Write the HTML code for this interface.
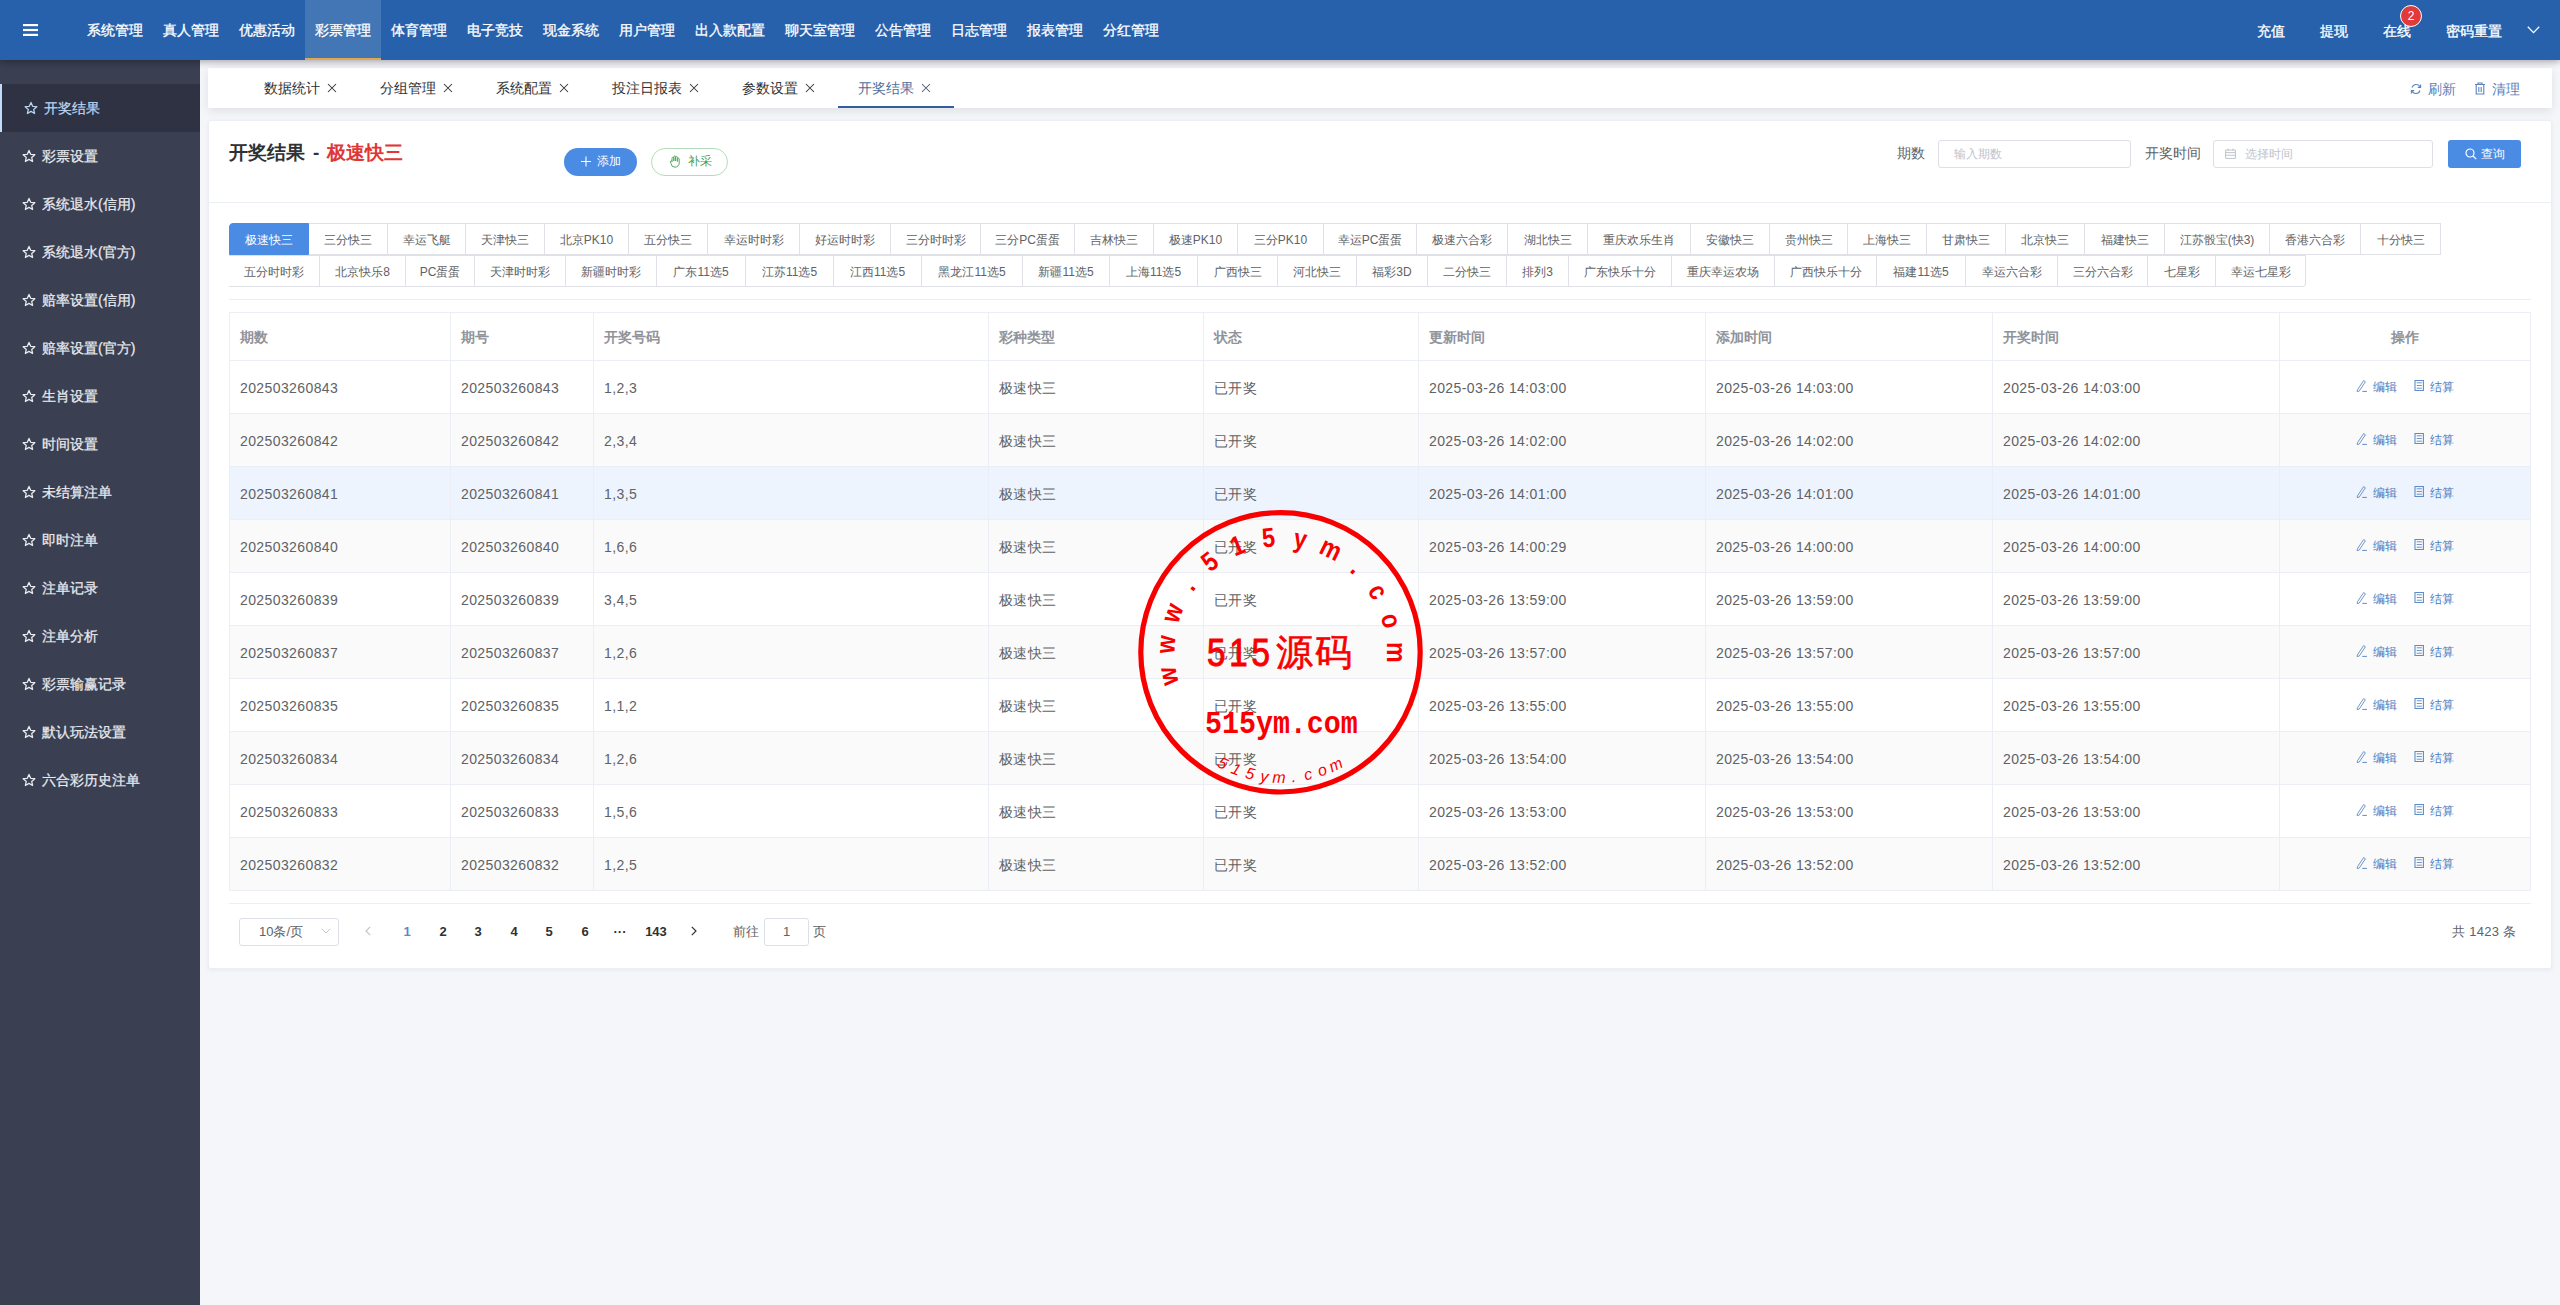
<!DOCTYPE html><html><head><meta charset="utf-8"><style>
*{box-sizing:border-box;margin:0;padding:0}
html,body{width:2560px;height:1305px;overflow:hidden}
body{position:relative;background:#f4f6fa;font-family:"Liberation Sans",sans-serif;font-size:14px;color:#606266}
.abs{position:absolute}
.t{position:absolute;white-space:nowrap}
#top{left:0;top:0;width:2560px;height:60px;background:#2761ac;box-shadow:0 2px 7px rgba(0,0,0,.32);z-index:5}
.nav{position:absolute;top:0;height:60px;line-height:60px;color:#fff;font-size:14px;padding:0 10px;white-space:nowrap;-webkit-text-stroke:0.3px #fff}
.nav.on{background:#4276b5}
.nav.on:after{content:"";position:absolute;left:0;right:0;bottom:0;height:2px;background:#e2a650}
#side{left:0;top:60px;width:200px;height:1245px;background:#3a3f51;z-index:3}
.si{position:absolute;left:0;width:200px;height:48px;line-height:48px;color:#e9ebf0;font-size:14px;padding-left:42px;white-space:nowrap;-webkit-text-stroke:0.25px currentColor}
.si svg{position:absolute;left:22px;top:17px}
.si.on{background:#2f3242;color:#b8d3f2;padding-left:44px}
.si.on svg{left:24px}
.si.on:before{content:"";position:absolute;left:0;top:0;width:2px;height:48px;background:#c3dbf8}
.card{position:absolute;background:#fff;border-radius:3px}
.tab{position:absolute;top:68px;height:40px;line-height:40px;font-size:14px;color:#303133;white-space:nowrap}
.tab .x{position:absolute;top:0}
.lt{position:absolute;height:32px;line-height:32px;font-size:12px;color:#606266;text-align:center;white-space:nowrap;border:1px solid #dfe1e6;border-left:none;background:#fff}
.lt.first{border-left:1px solid #dfe1e6}
.lt.on{background:#4a8be3;border-color:#4a8be3;color:#fff}
.th{position:absolute;font-size:14px;font-weight:bold;color:#909399;white-space:nowrap;padding-top:1px}
.td{position:absolute;font-size:14px;color:#606266;white-space:nowrap;letter-spacing:0.4px}
.op{position:absolute;font-size:12px;color:#4a7cbf;white-space:nowrap}
.pg{position:absolute;font-size:13px;font-weight:bold;color:#303133;text-align:center;width:30px}
</style></head><body>
<div id="top" class="abs">
<svg class="abs" style="left:23px;top:24px" width="15" height="12" viewBox="0 0 15 12"><rect x="0" y="0" width="15" height="2.2" fill="#fff"/><rect x="0" y="4.9" width="15" height="2.2" fill="#fff"/><rect x="0" y="9.8" width="15" height="2.2" fill="#fff"/></svg>
<div class="nav" style="left:77px;width:76px">系统管理</div>
<div class="nav" style="left:153px;width:76px">真人管理</div>
<div class="nav" style="left:229px;width:76px">优惠活动</div>
<div class="nav on" style="left:305px;width:76px">彩票管理</div>
<div class="nav" style="left:381px;width:76px">体育管理</div>
<div class="nav" style="left:457px;width:76px">电子竞技</div>
<div class="nav" style="left:533px;width:76px">现金系统</div>
<div class="nav" style="left:609px;width:76px">用户管理</div>
<div class="nav" style="left:685px;width:90px">出入款配置</div>
<div class="nav" style="left:775px;width:90px">聊天室管理</div>
<div class="nav" style="left:865px;width:76px">公告管理</div>
<div class="nav" style="left:941px;width:76px">日志管理</div>
<div class="nav" style="left:1017px;width:76px">报表管理</div>
<div class="nav" style="left:1093px;width:76px">分红管理</div>
<div class="t" style="left:2257px;top:0;line-height:62px;color:#fff;font-size:14px;-webkit-text-stroke:0.3px #fff">充值</div>
<div class="t" style="left:2320px;top:0;line-height:62px;color:#fff;font-size:14px;-webkit-text-stroke:0.3px #fff">提现</div>
<div class="t" style="left:2383px;top:0;line-height:62px;color:#fff;font-size:14px;-webkit-text-stroke:0.3px #fff">在线</div>
<div class="t" style="left:2446px;top:0;line-height:62px;color:#fff;font-size:14px;-webkit-text-stroke:0.3px #fff">密码重置</div>
<svg class="abs" style="left:2527px;top:26px" width="13" height="8" viewBox="0 0 13 8"><path d="M0.8 0.8 L6.5 6.6 L12.2 0.8" fill="none" stroke="#fff" stroke-width="1.3"/></svg>
<div class="abs" style="left:2400px;top:5px;width:22px;height:22px;border-radius:50%;background:#e03a3a;border:1px solid #fff;color:#fff;font-size:12px;line-height:20px;text-align:center">2</div>
</div>
<div id="side" class="abs">
<div class="si on" style="top:24px"><svg width="14" height="14" viewBox="0 0 24 24"><path d="M12 2.5l2.9 6.6 7.1.6-5.4 4.7 1.6 7-6.2-3.7-6.2 3.7 1.6-7L2 9.7l7.1-.6z" fill="none" stroke="#b8d3f2" stroke-width="2.2" stroke-linejoin="round"/></svg>开奖结果</div>
<div class="si" style="top:72px"><svg width="14" height="14" viewBox="0 0 24 24"><path d="M12 2.5l2.9 6.6 7.1.6-5.4 4.7 1.6 7-6.2-3.7-6.2 3.7 1.6-7L2 9.7l7.1-.6z" fill="none" stroke="#e9ebf0" stroke-width="2.2" stroke-linejoin="round"/></svg>彩票设置</div>
<div class="si" style="top:120px"><svg width="14" height="14" viewBox="0 0 24 24"><path d="M12 2.5l2.9 6.6 7.1.6-5.4 4.7 1.6 7-6.2-3.7-6.2 3.7 1.6-7L2 9.7l7.1-.6z" fill="none" stroke="#e9ebf0" stroke-width="2.2" stroke-linejoin="round"/></svg>系统退水(信用)</div>
<div class="si" style="top:168px"><svg width="14" height="14" viewBox="0 0 24 24"><path d="M12 2.5l2.9 6.6 7.1.6-5.4 4.7 1.6 7-6.2-3.7-6.2 3.7 1.6-7L2 9.7l7.1-.6z" fill="none" stroke="#e9ebf0" stroke-width="2.2" stroke-linejoin="round"/></svg>系统退水(官方)</div>
<div class="si" style="top:216px"><svg width="14" height="14" viewBox="0 0 24 24"><path d="M12 2.5l2.9 6.6 7.1.6-5.4 4.7 1.6 7-6.2-3.7-6.2 3.7 1.6-7L2 9.7l7.1-.6z" fill="none" stroke="#e9ebf0" stroke-width="2.2" stroke-linejoin="round"/></svg>赔率设置(信用)</div>
<div class="si" style="top:264px"><svg width="14" height="14" viewBox="0 0 24 24"><path d="M12 2.5l2.9 6.6 7.1.6-5.4 4.7 1.6 7-6.2-3.7-6.2 3.7 1.6-7L2 9.7l7.1-.6z" fill="none" stroke="#e9ebf0" stroke-width="2.2" stroke-linejoin="round"/></svg>赔率设置(官方)</div>
<div class="si" style="top:312px"><svg width="14" height="14" viewBox="0 0 24 24"><path d="M12 2.5l2.9 6.6 7.1.6-5.4 4.7 1.6 7-6.2-3.7-6.2 3.7 1.6-7L2 9.7l7.1-.6z" fill="none" stroke="#e9ebf0" stroke-width="2.2" stroke-linejoin="round"/></svg>生肖设置</div>
<div class="si" style="top:360px"><svg width="14" height="14" viewBox="0 0 24 24"><path d="M12 2.5l2.9 6.6 7.1.6-5.4 4.7 1.6 7-6.2-3.7-6.2 3.7 1.6-7L2 9.7l7.1-.6z" fill="none" stroke="#e9ebf0" stroke-width="2.2" stroke-linejoin="round"/></svg>时间设置</div>
<div class="si" style="top:408px"><svg width="14" height="14" viewBox="0 0 24 24"><path d="M12 2.5l2.9 6.6 7.1.6-5.4 4.7 1.6 7-6.2-3.7-6.2 3.7 1.6-7L2 9.7l7.1-.6z" fill="none" stroke="#e9ebf0" stroke-width="2.2" stroke-linejoin="round"/></svg>未结算注单</div>
<div class="si" style="top:456px"><svg width="14" height="14" viewBox="0 0 24 24"><path d="M12 2.5l2.9 6.6 7.1.6-5.4 4.7 1.6 7-6.2-3.7-6.2 3.7 1.6-7L2 9.7l7.1-.6z" fill="none" stroke="#e9ebf0" stroke-width="2.2" stroke-linejoin="round"/></svg>即时注单</div>
<div class="si" style="top:504px"><svg width="14" height="14" viewBox="0 0 24 24"><path d="M12 2.5l2.9 6.6 7.1.6-5.4 4.7 1.6 7-6.2-3.7-6.2 3.7 1.6-7L2 9.7l7.1-.6z" fill="none" stroke="#e9ebf0" stroke-width="2.2" stroke-linejoin="round"/></svg>注单记录</div>
<div class="si" style="top:552px"><svg width="14" height="14" viewBox="0 0 24 24"><path d="M12 2.5l2.9 6.6 7.1.6-5.4 4.7 1.6 7-6.2-3.7-6.2 3.7 1.6-7L2 9.7l7.1-.6z" fill="none" stroke="#e9ebf0" stroke-width="2.2" stroke-linejoin="round"/></svg>注单分析</div>
<div class="si" style="top:600px"><svg width="14" height="14" viewBox="0 0 24 24"><path d="M12 2.5l2.9 6.6 7.1.6-5.4 4.7 1.6 7-6.2-3.7-6.2 3.7 1.6-7L2 9.7l7.1-.6z" fill="none" stroke="#e9ebf0" stroke-width="2.2" stroke-linejoin="round"/></svg>彩票输赢记录</div>
<div class="si" style="top:648px"><svg width="14" height="14" viewBox="0 0 24 24"><path d="M12 2.5l2.9 6.6 7.1.6-5.4 4.7 1.6 7-6.2-3.7-6.2 3.7 1.6-7L2 9.7l7.1-.6z" fill="none" stroke="#e9ebf0" stroke-width="2.2" stroke-linejoin="round"/></svg>默认玩法设置</div>
<div class="si" style="top:696px"><svg width="14" height="14" viewBox="0 0 24 24"><path d="M12 2.5l2.9 6.6 7.1.6-5.4 4.7 1.6 7-6.2-3.7-6.2 3.7 1.6-7L2 9.7l7.1-.6z" fill="none" stroke="#e9ebf0" stroke-width="2.2" stroke-linejoin="round"/></svg>六合彩历史注单</div>
</div>
<div class="abs" style="left:208px;top:68px;width:2344px;height:40px;background:#fff;box-shadow:0 3px 10px rgba(0,0,0,.09)"></div>
<div class="t" style="left:264px;top:68px;line-height:40px;font-size:14px;color:#303133">数据统计</div>
<div class="abs" style="left:327px;top:83px;line-height:0"><svg width="10" height="10" viewBox="0 0 10 10"><path d="M1 1L9 9M9 1L1 9" stroke="#303133" stroke-width="1.05"/></svg></div>
<div class="t" style="left:380px;top:68px;line-height:40px;font-size:14px;color:#303133">分组管理</div>
<div class="abs" style="left:443px;top:83px;line-height:0"><svg width="10" height="10" viewBox="0 0 10 10"><path d="M1 1L9 9M9 1L1 9" stroke="#303133" stroke-width="1.05"/></svg></div>
<div class="t" style="left:496px;top:68px;line-height:40px;font-size:14px;color:#303133">系统配置</div>
<div class="abs" style="left:559px;top:83px;line-height:0"><svg width="10" height="10" viewBox="0 0 10 10"><path d="M1 1L9 9M9 1L1 9" stroke="#303133" stroke-width="1.05"/></svg></div>
<div class="t" style="left:612px;top:68px;line-height:40px;font-size:14px;color:#303133">投注日报表</div>
<div class="abs" style="left:689px;top:83px;line-height:0"><svg width="10" height="10" viewBox="0 0 10 10"><path d="M1 1L9 9M9 1L1 9" stroke="#303133" stroke-width="1.05"/></svg></div>
<div class="t" style="left:742px;top:68px;line-height:40px;font-size:14px;color:#303133">参数设置</div>
<div class="abs" style="left:805px;top:83px;line-height:0"><svg width="10" height="10" viewBox="0 0 10 10"><path d="M1 1L9 9M9 1L1 9" stroke="#303133" stroke-width="1.05"/></svg></div>
<div class="t" style="left:858px;top:68px;line-height:40px;font-size:14px;color:#4f6f9f">开奖结果</div>
<div class="abs" style="left:921px;top:83px;line-height:0"><svg width="10" height="10" viewBox="0 0 10 10"><path d="M1 1L9 9M9 1L1 9" stroke="#505a6a" stroke-width="1.05"/></svg></div>
<div class="abs" style="left:838px;top:106px;width:116px;height:2px;background:#335e9a"></div>
<svg class="abs" style="left:2410px;top:83px" width="12" height="12" viewBox="0 0 12 12"><path d="M10.2 4.2A4.4 4.4 0 0 0 2 4.5M1.8 7.8A4.4 4.4 0 0 0 10 7.5" fill="none" stroke="#5b84c0" stroke-width="1.1"/><path d="M10.6 1.6v2.8H7.8M1.4 10.4V7.6h2.8" fill="none" stroke="#5b84c0" stroke-width="1.1"/></svg>
<div class="t" style="left:2428px;top:68px;line-height:43px;font-size:14px;color:#5b80b8">刷新</div>
<svg class="abs" style="left:2474px;top:82px" width="12" height="13" viewBox="0 0 12 13"><path d="M1 2.5h10M4 2.5V1h4v1.5M2.2 2.5v9.5h7.6V2.5M4.8 5v5M7.2 5v5" fill="none" stroke="#5b84c0" stroke-width="1.1"/></svg>
<div class="t" style="left:2492px;top:68px;line-height:43px;font-size:14px;color:#5b80b8">清理</div>
<div class="card" style="left:208px;top:120px;width:2344px;height:849px;box-shadow:0 1px 4px rgba(0,0,0,.06);border:1px solid #ebeef5"></div>
<div class="abs" style="left:209px;top:202px;width:2342px;height:1px;background:#ebeef5"></div>
<div class="t" style="left:229px;top:140px;line-height:26px;font-size:19px;font-weight:bold;color:#303133">开奖结果</div>
<div class="t" style="left:313px;top:140px;line-height:26px;font-size:19px;font-weight:bold;color:#303133">-</div>
<div class="t" style="left:327px;top:140px;line-height:26px;font-size:19px;font-weight:bold;color:#e03636">极速快三</div>
<div class="abs" style="left:564px;top:148px;width:73px;height:28px;border-radius:14px;background:#4a8be3;color:#fff;font-size:12px;line-height:26px;padding-left:33px;white-space:nowrap">添加</div>
<svg class="abs" style="left:581px;top:156px" width="10" height="11" viewBox="0 0 10 11"><path d="M5 0.5v10M0 5.5h10" stroke="#fff" stroke-width="1.1"/></svg>
<div class="abs" style="left:651px;top:148px;width:77px;height:28px;border-radius:14px;background:#fff;border:1px solid #b5dcb9;color:#3f9e4c;font-size:12px;line-height:25px;padding-left:36px;white-space:nowrap">补采</div>
<svg class="abs" style="left:669px;top:155px" width="12" height="13" viewBox="0 0 12 13"><path d="M3 7V3.2a.9.9 0 0 1 1.8 0V6M4.8 6V1.8a.9.9 0 0 1 1.8 0V6M6.6 6V2.5a.9.9 0 0 1 1.8 0V6.5M8.4 6.5V4a.9.9 0 0 1 1.8 0v4a4.2 4.2 0 0 1-4.2 4.2A4 4 0 0 1 2 8.5L1.3 6.8a.9.9 0 0 1 1.6-.6L3 7" fill="none" stroke="#4fae5d" stroke-width="1"/></svg>
<div class="t" style="left:1897px;top:139px;line-height:28px;font-size:14px;color:#606266">期数</div>
<div class="abs" style="left:1938px;top:140px;width:193px;height:28px;border:1px solid #dcdfe6;border-radius:3px;font-size:12px;color:#c0c4cc;line-height:26px;padding-left:15px">输入期数</div>
<div class="t" style="left:2145px;top:139px;line-height:28px;font-size:14px;color:#606266">开奖时间</div>
<div class="abs" style="left:2213px;top:140px;width:220px;height:28px;border:1px solid #dcdfe6;border-radius:3px;font-size:12px;color:#c0c4cc;line-height:26px;padding-left:31px">选择时间</div>
<svg class="abs" style="left:2225px;top:148px" width="11" height="11" viewBox="0 0 11 11"><path d="M.6 2h9.8v8.4H.6zM.6 4.6h9.8M.6 7.2h9.8M3 .5v2.5M8 .5v2.5" fill="none" stroke="#c0c4cc" stroke-width="1"/></svg>
<div class="abs" style="left:2448px;top:140px;width:73px;height:28px;border-radius:3px;background:#4a8be3;color:#fff;font-size:12px;line-height:28px;padding-left:33px">查询</div>
<svg class="abs" style="left:2465px;top:148px" width="12" height="12" viewBox="0 0 12 12"><circle cx="5" cy="5" r="4" fill="none" stroke="#fff" stroke-width="1.2"/><path d="M8 8l3.2 3.2" stroke="#fff" stroke-width="1.2"/></svg>
<div class="lt first on" style="left:229.0px;top:223px;width:80.0px;border-top-left-radius:4px;">极速快三</div>
<div class="lt" style="left:309.0px;top:223px;width:79.0px;">三分快三</div>
<div class="lt" style="left:388.0px;top:223px;width:78.0px;">幸运飞艇</div>
<div class="lt" style="left:466.0px;top:223px;width:79.0px;">天津快三</div>
<div class="lt" style="left:545.0px;top:223px;width:84.0px;">北京PK10</div>
<div class="lt" style="left:629.0px;top:223px;width:79.0px;">五分快三</div>
<div class="lt" style="left:708.0px;top:223px;width:92.0px;">幸运时时彩</div>
<div class="lt" style="left:800.0px;top:223px;width:91.0px;">好运时时彩</div>
<div class="lt" style="left:891.0px;top:223px;width:90.0px;">三分时时彩</div>
<div class="lt" style="left:981.0px;top:223px;width:94.0px;">三分PC蛋蛋</div>
<div class="lt" style="left:1075.0px;top:223px;width:79.0px;">吉林快三</div>
<div class="lt" style="left:1154.0px;top:223px;width:84.0px;">极速PK10</div>
<div class="lt" style="left:1238.0px;top:223px;width:86.0px;">三分PK10</div>
<div class="lt" style="left:1324.0px;top:223px;width:93.0px;">幸运PC蛋蛋</div>
<div class="lt" style="left:1417.0px;top:223px;width:91.0px;">极速六合彩</div>
<div class="lt" style="left:1508.0px;top:223px;width:80.0px;">湖北快三</div>
<div class="lt" style="left:1588.0px;top:223px;width:103.0px;">重庆欢乐生肖</div>
<div class="lt" style="left:1691.0px;top:223px;width:79.0px;">安徽快三</div>
<div class="lt" style="left:1770.0px;top:223px;width:78.0px;">贵州快三</div>
<div class="lt" style="left:1848.0px;top:223px;width:79.0px;">上海快三</div>
<div class="lt" style="left:1927.0px;top:223px;width:79.0px;">甘肃快三</div>
<div class="lt" style="left:2006.0px;top:223px;width:79.0px;">北京快三</div>
<div class="lt" style="left:2085.0px;top:223px;width:80.0px;">福建快三</div>
<div class="lt" style="left:2165.0px;top:223px;width:105.0px;">江苏骰宝(快3)</div>
<div class="lt" style="left:2270.0px;top:223px;width:91.0px;">香港六合彩</div>
<div class="lt" style="left:2361.0px;top:223px;width:80.0px;">十分快三</div>
<div class="lt" style="left:229.0px;top:255px;width:91.0px;">五分时时彩</div>
<div class="lt" style="left:320.0px;top:255px;width:86.0px;">北京快乐8</div>
<div class="lt" style="left:406.0px;top:255px;width:69.0px;">PC蛋蛋</div>
<div class="lt" style="left:475.0px;top:255px;width:91.0px;">天津时时彩</div>
<div class="lt" style="left:566.0px;top:255px;width:91.0px;">新疆时时彩</div>
<div class="lt" style="left:657.0px;top:255px;width:89.0px;">广东11选5</div>
<div class="lt" style="left:746.0px;top:255px;width:88.0px;">江苏11选5</div>
<div class="lt" style="left:834.0px;top:255px;width:88.0px;">江西11选5</div>
<div class="lt" style="left:922.0px;top:255px;width:101.0px;">黑龙江11选5</div>
<div class="lt" style="left:1023.0px;top:255px;width:87.0px;">新疆11选5</div>
<div class="lt" style="left:1110.0px;top:255px;width:88.0px;">上海11选5</div>
<div class="lt" style="left:1198.0px;top:255px;width:80.0px;">广西快三</div>
<div class="lt" style="left:1278.0px;top:255px;width:79.0px;">河北快三</div>
<div class="lt" style="left:1357.0px;top:255px;width:71.0px;">福彩3D</div>
<div class="lt" style="left:1428.0px;top:255px;width:79.0px;">二分快三</div>
<div class="lt" style="left:1507.0px;top:255px;width:62.0px;">排列3</div>
<div class="lt" style="left:1569.0px;top:255px;width:103.0px;">广东快乐十分</div>
<div class="lt" style="left:1672.0px;top:255px;width:103.0px;">重庆幸运农场</div>
<div class="lt" style="left:1775.0px;top:255px;width:102.0px;">广西快乐十分</div>
<div class="lt" style="left:1877.0px;top:255px;width:89.0px;">福建11选5</div>
<div class="lt" style="left:1966.0px;top:255px;width:92.0px;">幸运六合彩</div>
<div class="lt" style="left:2058.0px;top:255px;width:90.0px;">三分六合彩</div>
<div class="lt" style="left:2148.0px;top:255px;width:68.0px;">七星彩</div>
<div class="lt" style="left:2216.0px;top:255px;width:90.0px;border-bottom-right-radius:4px;">幸运七星彩</div>
<div class="abs" style="left:229px;top:299px;width:2302px;height:1px;background:#ebeef5"></div>
<div class="abs" style="left:229px;top:312px;width:2302px;height:579px;border:1px solid #ebeef5;background:#fff"></div>
<div class="abs" style="left:230px;top:360px;width:2300px;height:53px;background:#fff;border-top:1px solid #ebeef5"></div>
<div class="abs" style="left:230px;top:413px;width:2300px;height:53px;background:#fafafa;border-top:1px solid #ebeef5"></div>
<div class="abs" style="left:230px;top:466px;width:2300px;height:53px;background:#eef4fd;border-top:1px solid #ebeef5"></div>
<div class="abs" style="left:230px;top:519px;width:2300px;height:53px;background:#fafafa;border-top:1px solid #ebeef5"></div>
<div class="abs" style="left:230px;top:572px;width:2300px;height:53px;background:#fff;border-top:1px solid #ebeef5"></div>
<div class="abs" style="left:230px;top:625px;width:2300px;height:53px;background:#fafafa;border-top:1px solid #ebeef5"></div>
<div class="abs" style="left:230px;top:678px;width:2300px;height:53px;background:#fff;border-top:1px solid #ebeef5"></div>
<div class="abs" style="left:230px;top:731px;width:2300px;height:53px;background:#fafafa;border-top:1px solid #ebeef5"></div>
<div class="abs" style="left:230px;top:784px;width:2300px;height:53px;background:#fff;border-top:1px solid #ebeef5"></div>
<div class="abs" style="left:230px;top:837px;width:2300px;height:53px;background:#fafafa;border-top:1px solid #ebeef5"></div>
<div class="abs" style="left:450px;top:312px;width:1px;height:578px;background:#ebeef5"></div>
<div class="abs" style="left:593px;top:312px;width:1px;height:578px;background:#ebeef5"></div>
<div class="abs" style="left:988px;top:312px;width:1px;height:578px;background:#ebeef5"></div>
<div class="abs" style="left:1203px;top:312px;width:1px;height:578px;background:#ebeef5"></div>
<div class="abs" style="left:1418px;top:312px;width:1px;height:578px;background:#ebeef5"></div>
<div class="abs" style="left:1705px;top:312px;width:1px;height:578px;background:#ebeef5"></div>
<div class="abs" style="left:1992px;top:312px;width:1px;height:578px;background:#ebeef5"></div>
<div class="abs" style="left:2279px;top:312px;width:1px;height:578px;background:#ebeef5"></div>
<div class="th" style="left:240px;top:312px;line-height:48px">期数</div>
<div class="th" style="left:461px;top:312px;line-height:48px">期号</div>
<div class="th" style="left:604px;top:312px;line-height:48px">开奖号码</div>
<div class="th" style="left:999px;top:312px;line-height:48px">彩种类型</div>
<div class="th" style="left:1214px;top:312px;line-height:48px">状态</div>
<div class="th" style="left:1429px;top:312px;line-height:48px">更新时间</div>
<div class="th" style="left:1716px;top:312px;line-height:48px">添加时间</div>
<div class="th" style="left:2003px;top:312px;line-height:48px">开奖时间</div>
<div class="th" style="left:2279px;width:252px;text-align:center;top:312px;line-height:48px">操作</div>
<div class="td" style="left:240px;top:360px;line-height:56px">202503260843</div>
<div class="td" style="left:461px;top:360px;line-height:56px">202503260843</div>
<div class="td" style="left:604px;top:360px;line-height:56px">1,2,3</div>
<div class="td" style="left:999px;top:360px;line-height:56px">极速快三</div>
<div class="td" style="left:1214px;top:360px;line-height:56px">已开奖</div>
<div class="td" style="left:1429px;top:360px;line-height:56px">2025-03-26 14:03:00</div>
<div class="td" style="left:1716px;top:360px;line-height:56px">2025-03-26 14:03:00</div>
<div class="td" style="left:2003px;top:360px;line-height:56px">2025-03-26 14:03:00</div>
<div class="abs" style="left:2355px;top:379px;line-height:0"><svg width="14" height="14" viewBox="0 0 14 14"><path d="M2.4 10.9L8.6 1.6L10.4 2.8L4.2 12.1L2.2 12.6Z" fill="none" stroke="#5f8bc6" stroke-width="0.9" stroke-linejoin="round"/><path d="M7.3 12.4h4.6" stroke="#5f8bc6" stroke-width="1"/></svg></div>
<div class="op" style="left:2373px;top:360px;line-height:55px">编辑</div>
<div class="abs" style="left:2414px;top:379px;line-height:0"><svg width="12" height="14" viewBox="0 0 12 14"><path d="M1 1.5H9.4V11.5H1Z" fill="none" stroke="#5f8bc6" stroke-width="1.1"/><path d="M2.7 3.8h5.2M2.7 6.5h5.2M2.7 9.2h5.2" stroke="#5f8bc6" stroke-width="0.9"/></svg></div>
<div class="op" style="left:2430px;top:360px;line-height:55px">结算</div>
<div class="td" style="left:240px;top:413px;line-height:56px">202503260842</div>
<div class="td" style="left:461px;top:413px;line-height:56px">202503260842</div>
<div class="td" style="left:604px;top:413px;line-height:56px">2,3,4</div>
<div class="td" style="left:999px;top:413px;line-height:56px">极速快三</div>
<div class="td" style="left:1214px;top:413px;line-height:56px">已开奖</div>
<div class="td" style="left:1429px;top:413px;line-height:56px">2025-03-26 14:02:00</div>
<div class="td" style="left:1716px;top:413px;line-height:56px">2025-03-26 14:02:00</div>
<div class="td" style="left:2003px;top:413px;line-height:56px">2025-03-26 14:02:00</div>
<div class="abs" style="left:2355px;top:432px;line-height:0"><svg width="14" height="14" viewBox="0 0 14 14"><path d="M2.4 10.9L8.6 1.6L10.4 2.8L4.2 12.1L2.2 12.6Z" fill="none" stroke="#5f8bc6" stroke-width="0.9" stroke-linejoin="round"/><path d="M7.3 12.4h4.6" stroke="#5f8bc6" stroke-width="1"/></svg></div>
<div class="op" style="left:2373px;top:413px;line-height:55px">编辑</div>
<div class="abs" style="left:2414px;top:432px;line-height:0"><svg width="12" height="14" viewBox="0 0 12 14"><path d="M1 1.5H9.4V11.5H1Z" fill="none" stroke="#5f8bc6" stroke-width="1.1"/><path d="M2.7 3.8h5.2M2.7 6.5h5.2M2.7 9.2h5.2" stroke="#5f8bc6" stroke-width="0.9"/></svg></div>
<div class="op" style="left:2430px;top:413px;line-height:55px">结算</div>
<div class="td" style="left:240px;top:466px;line-height:56px">202503260841</div>
<div class="td" style="left:461px;top:466px;line-height:56px">202503260841</div>
<div class="td" style="left:604px;top:466px;line-height:56px">1,3,5</div>
<div class="td" style="left:999px;top:466px;line-height:56px">极速快三</div>
<div class="td" style="left:1214px;top:466px;line-height:56px">已开奖</div>
<div class="td" style="left:1429px;top:466px;line-height:56px">2025-03-26 14:01:00</div>
<div class="td" style="left:1716px;top:466px;line-height:56px">2025-03-26 14:01:00</div>
<div class="td" style="left:2003px;top:466px;line-height:56px">2025-03-26 14:01:00</div>
<div class="abs" style="left:2355px;top:485px;line-height:0"><svg width="14" height="14" viewBox="0 0 14 14"><path d="M2.4 10.9L8.6 1.6L10.4 2.8L4.2 12.1L2.2 12.6Z" fill="none" stroke="#5f8bc6" stroke-width="0.9" stroke-linejoin="round"/><path d="M7.3 12.4h4.6" stroke="#5f8bc6" stroke-width="1"/></svg></div>
<div class="op" style="left:2373px;top:466px;line-height:55px">编辑</div>
<div class="abs" style="left:2414px;top:485px;line-height:0"><svg width="12" height="14" viewBox="0 0 12 14"><path d="M1 1.5H9.4V11.5H1Z" fill="none" stroke="#5f8bc6" stroke-width="1.1"/><path d="M2.7 3.8h5.2M2.7 6.5h5.2M2.7 9.2h5.2" stroke="#5f8bc6" stroke-width="0.9"/></svg></div>
<div class="op" style="left:2430px;top:466px;line-height:55px">结算</div>
<div class="td" style="left:240px;top:519px;line-height:56px">202503260840</div>
<div class="td" style="left:461px;top:519px;line-height:56px">202503260840</div>
<div class="td" style="left:604px;top:519px;line-height:56px">1,6,6</div>
<div class="td" style="left:999px;top:519px;line-height:56px">极速快三</div>
<div class="td" style="left:1214px;top:519px;line-height:56px">已开奖</div>
<div class="td" style="left:1429px;top:519px;line-height:56px">2025-03-26 14:00:29</div>
<div class="td" style="left:1716px;top:519px;line-height:56px">2025-03-26 14:00:00</div>
<div class="td" style="left:2003px;top:519px;line-height:56px">2025-03-26 14:00:00</div>
<div class="abs" style="left:2355px;top:538px;line-height:0"><svg width="14" height="14" viewBox="0 0 14 14"><path d="M2.4 10.9L8.6 1.6L10.4 2.8L4.2 12.1L2.2 12.6Z" fill="none" stroke="#5f8bc6" stroke-width="0.9" stroke-linejoin="round"/><path d="M7.3 12.4h4.6" stroke="#5f8bc6" stroke-width="1"/></svg></div>
<div class="op" style="left:2373px;top:519px;line-height:55px">编辑</div>
<div class="abs" style="left:2414px;top:538px;line-height:0"><svg width="12" height="14" viewBox="0 0 12 14"><path d="M1 1.5H9.4V11.5H1Z" fill="none" stroke="#5f8bc6" stroke-width="1.1"/><path d="M2.7 3.8h5.2M2.7 6.5h5.2M2.7 9.2h5.2" stroke="#5f8bc6" stroke-width="0.9"/></svg></div>
<div class="op" style="left:2430px;top:519px;line-height:55px">结算</div>
<div class="td" style="left:240px;top:572px;line-height:56px">202503260839</div>
<div class="td" style="left:461px;top:572px;line-height:56px">202503260839</div>
<div class="td" style="left:604px;top:572px;line-height:56px">3,4,5</div>
<div class="td" style="left:999px;top:572px;line-height:56px">极速快三</div>
<div class="td" style="left:1214px;top:572px;line-height:56px">已开奖</div>
<div class="td" style="left:1429px;top:572px;line-height:56px">2025-03-26 13:59:00</div>
<div class="td" style="left:1716px;top:572px;line-height:56px">2025-03-26 13:59:00</div>
<div class="td" style="left:2003px;top:572px;line-height:56px">2025-03-26 13:59:00</div>
<div class="abs" style="left:2355px;top:591px;line-height:0"><svg width="14" height="14" viewBox="0 0 14 14"><path d="M2.4 10.9L8.6 1.6L10.4 2.8L4.2 12.1L2.2 12.6Z" fill="none" stroke="#5f8bc6" stroke-width="0.9" stroke-linejoin="round"/><path d="M7.3 12.4h4.6" stroke="#5f8bc6" stroke-width="1"/></svg></div>
<div class="op" style="left:2373px;top:572px;line-height:55px">编辑</div>
<div class="abs" style="left:2414px;top:591px;line-height:0"><svg width="12" height="14" viewBox="0 0 12 14"><path d="M1 1.5H9.4V11.5H1Z" fill="none" stroke="#5f8bc6" stroke-width="1.1"/><path d="M2.7 3.8h5.2M2.7 6.5h5.2M2.7 9.2h5.2" stroke="#5f8bc6" stroke-width="0.9"/></svg></div>
<div class="op" style="left:2430px;top:572px;line-height:55px">结算</div>
<div class="td" style="left:240px;top:625px;line-height:56px">202503260837</div>
<div class="td" style="left:461px;top:625px;line-height:56px">202503260837</div>
<div class="td" style="left:604px;top:625px;line-height:56px">1,2,6</div>
<div class="td" style="left:999px;top:625px;line-height:56px">极速快三</div>
<div class="td" style="left:1214px;top:625px;line-height:56px">已开奖</div>
<div class="td" style="left:1429px;top:625px;line-height:56px">2025-03-26 13:57:00</div>
<div class="td" style="left:1716px;top:625px;line-height:56px">2025-03-26 13:57:00</div>
<div class="td" style="left:2003px;top:625px;line-height:56px">2025-03-26 13:57:00</div>
<div class="abs" style="left:2355px;top:644px;line-height:0"><svg width="14" height="14" viewBox="0 0 14 14"><path d="M2.4 10.9L8.6 1.6L10.4 2.8L4.2 12.1L2.2 12.6Z" fill="none" stroke="#5f8bc6" stroke-width="0.9" stroke-linejoin="round"/><path d="M7.3 12.4h4.6" stroke="#5f8bc6" stroke-width="1"/></svg></div>
<div class="op" style="left:2373px;top:625px;line-height:55px">编辑</div>
<div class="abs" style="left:2414px;top:644px;line-height:0"><svg width="12" height="14" viewBox="0 0 12 14"><path d="M1 1.5H9.4V11.5H1Z" fill="none" stroke="#5f8bc6" stroke-width="1.1"/><path d="M2.7 3.8h5.2M2.7 6.5h5.2M2.7 9.2h5.2" stroke="#5f8bc6" stroke-width="0.9"/></svg></div>
<div class="op" style="left:2430px;top:625px;line-height:55px">结算</div>
<div class="td" style="left:240px;top:678px;line-height:56px">202503260835</div>
<div class="td" style="left:461px;top:678px;line-height:56px">202503260835</div>
<div class="td" style="left:604px;top:678px;line-height:56px">1,1,2</div>
<div class="td" style="left:999px;top:678px;line-height:56px">极速快三</div>
<div class="td" style="left:1214px;top:678px;line-height:56px">已开奖</div>
<div class="td" style="left:1429px;top:678px;line-height:56px">2025-03-26 13:55:00</div>
<div class="td" style="left:1716px;top:678px;line-height:56px">2025-03-26 13:55:00</div>
<div class="td" style="left:2003px;top:678px;line-height:56px">2025-03-26 13:55:00</div>
<div class="abs" style="left:2355px;top:697px;line-height:0"><svg width="14" height="14" viewBox="0 0 14 14"><path d="M2.4 10.9L8.6 1.6L10.4 2.8L4.2 12.1L2.2 12.6Z" fill="none" stroke="#5f8bc6" stroke-width="0.9" stroke-linejoin="round"/><path d="M7.3 12.4h4.6" stroke="#5f8bc6" stroke-width="1"/></svg></div>
<div class="op" style="left:2373px;top:678px;line-height:55px">编辑</div>
<div class="abs" style="left:2414px;top:697px;line-height:0"><svg width="12" height="14" viewBox="0 0 12 14"><path d="M1 1.5H9.4V11.5H1Z" fill="none" stroke="#5f8bc6" stroke-width="1.1"/><path d="M2.7 3.8h5.2M2.7 6.5h5.2M2.7 9.2h5.2" stroke="#5f8bc6" stroke-width="0.9"/></svg></div>
<div class="op" style="left:2430px;top:678px;line-height:55px">结算</div>
<div class="td" style="left:240px;top:731px;line-height:56px">202503260834</div>
<div class="td" style="left:461px;top:731px;line-height:56px">202503260834</div>
<div class="td" style="left:604px;top:731px;line-height:56px">1,2,6</div>
<div class="td" style="left:999px;top:731px;line-height:56px">极速快三</div>
<div class="td" style="left:1214px;top:731px;line-height:56px">已开奖</div>
<div class="td" style="left:1429px;top:731px;line-height:56px">2025-03-26 13:54:00</div>
<div class="td" style="left:1716px;top:731px;line-height:56px">2025-03-26 13:54:00</div>
<div class="td" style="left:2003px;top:731px;line-height:56px">2025-03-26 13:54:00</div>
<div class="abs" style="left:2355px;top:750px;line-height:0"><svg width="14" height="14" viewBox="0 0 14 14"><path d="M2.4 10.9L8.6 1.6L10.4 2.8L4.2 12.1L2.2 12.6Z" fill="none" stroke="#5f8bc6" stroke-width="0.9" stroke-linejoin="round"/><path d="M7.3 12.4h4.6" stroke="#5f8bc6" stroke-width="1"/></svg></div>
<div class="op" style="left:2373px;top:731px;line-height:55px">编辑</div>
<div class="abs" style="left:2414px;top:750px;line-height:0"><svg width="12" height="14" viewBox="0 0 12 14"><path d="M1 1.5H9.4V11.5H1Z" fill="none" stroke="#5f8bc6" stroke-width="1.1"/><path d="M2.7 3.8h5.2M2.7 6.5h5.2M2.7 9.2h5.2" stroke="#5f8bc6" stroke-width="0.9"/></svg></div>
<div class="op" style="left:2430px;top:731px;line-height:55px">结算</div>
<div class="td" style="left:240px;top:784px;line-height:56px">202503260833</div>
<div class="td" style="left:461px;top:784px;line-height:56px">202503260833</div>
<div class="td" style="left:604px;top:784px;line-height:56px">1,5,6</div>
<div class="td" style="left:999px;top:784px;line-height:56px">极速快三</div>
<div class="td" style="left:1214px;top:784px;line-height:56px">已开奖</div>
<div class="td" style="left:1429px;top:784px;line-height:56px">2025-03-26 13:53:00</div>
<div class="td" style="left:1716px;top:784px;line-height:56px">2025-03-26 13:53:00</div>
<div class="td" style="left:2003px;top:784px;line-height:56px">2025-03-26 13:53:00</div>
<div class="abs" style="left:2355px;top:803px;line-height:0"><svg width="14" height="14" viewBox="0 0 14 14"><path d="M2.4 10.9L8.6 1.6L10.4 2.8L4.2 12.1L2.2 12.6Z" fill="none" stroke="#5f8bc6" stroke-width="0.9" stroke-linejoin="round"/><path d="M7.3 12.4h4.6" stroke="#5f8bc6" stroke-width="1"/></svg></div>
<div class="op" style="left:2373px;top:784px;line-height:55px">编辑</div>
<div class="abs" style="left:2414px;top:803px;line-height:0"><svg width="12" height="14" viewBox="0 0 12 14"><path d="M1 1.5H9.4V11.5H1Z" fill="none" stroke="#5f8bc6" stroke-width="1.1"/><path d="M2.7 3.8h5.2M2.7 6.5h5.2M2.7 9.2h5.2" stroke="#5f8bc6" stroke-width="0.9"/></svg></div>
<div class="op" style="left:2430px;top:784px;line-height:55px">结算</div>
<div class="td" style="left:240px;top:837px;line-height:56px">202503260832</div>
<div class="td" style="left:461px;top:837px;line-height:56px">202503260832</div>
<div class="td" style="left:604px;top:837px;line-height:56px">1,2,5</div>
<div class="td" style="left:999px;top:837px;line-height:56px">极速快三</div>
<div class="td" style="left:1214px;top:837px;line-height:56px">已开奖</div>
<div class="td" style="left:1429px;top:837px;line-height:56px">2025-03-26 13:52:00</div>
<div class="td" style="left:1716px;top:837px;line-height:56px">2025-03-26 13:52:00</div>
<div class="td" style="left:2003px;top:837px;line-height:56px">2025-03-26 13:52:00</div>
<div class="abs" style="left:2355px;top:856px;line-height:0"><svg width="14" height="14" viewBox="0 0 14 14"><path d="M2.4 10.9L8.6 1.6L10.4 2.8L4.2 12.1L2.2 12.6Z" fill="none" stroke="#5f8bc6" stroke-width="0.9" stroke-linejoin="round"/><path d="M7.3 12.4h4.6" stroke="#5f8bc6" stroke-width="1"/></svg></div>
<div class="op" style="left:2373px;top:837px;line-height:55px">编辑</div>
<div class="abs" style="left:2414px;top:856px;line-height:0"><svg width="12" height="14" viewBox="0 0 12 14"><path d="M1 1.5H9.4V11.5H1Z" fill="none" stroke="#5f8bc6" stroke-width="1.1"/><path d="M2.7 3.8h5.2M2.7 6.5h5.2M2.7 9.2h5.2" stroke="#5f8bc6" stroke-width="0.9"/></svg></div>
<div class="op" style="left:2430px;top:837px;line-height:55px">结算</div>
<div class="abs" style="left:229px;top:903px;width:2302px;height:1px;background:#ebeef5"></div>
<div class="abs" style="left:239px;top:918px;width:100px;height:28px;border:1px solid #dcdfe6;border-radius:3px;font-size:13px;color:#606266;line-height:26px;padding-left:19px">10条/页</div>
<svg class="abs" style="left:321px;top:928px" width="10" height="6" viewBox="0 0 10 6"><path d="M.8.8L5 5 9.2.8" fill="none" stroke="#c0c4cc" stroke-width="1"/></svg>
<svg class="abs" style="left:365px;top:926px" width="6" height="10" viewBox="0 0 6 10"><path d="M5.2.8L1 5l4.2 4.2" fill="none" stroke="#c0c4cc" stroke-width="1.2"/></svg>
<div class="pg" style="left:392px;top:918px;line-height:27px;color:#5d89c2">1</div>
<div class="pg" style="left:428px;top:918px;line-height:27px;color:#303133">2</div>
<div class="pg" style="left:463px;top:918px;line-height:27px;color:#303133">3</div>
<div class="pg" style="left:499px;top:918px;line-height:27px;color:#303133">4</div>
<div class="pg" style="left:534px;top:918px;line-height:27px;color:#303133">5</div>
<div class="pg" style="left:570px;top:918px;line-height:27px;color:#303133">6</div>
<div class="pg" style="left:605px;top:918px;line-height:27px;color:#303133">···</div>
<div class="pg" style="left:641px;top:918px;line-height:27px;color:#303133">143</div>
<svg class="abs" style="left:691px;top:926px" width="6" height="10" viewBox="0 0 6 10"><path d="M.8.8L5 5 .8 9.2" fill="none" stroke="#303133" stroke-width="1.2"/></svg>
<div class="t" style="left:733px;top:918px;line-height:27px;font-size:13px;color:#606266">前往</div>
<div class="abs" style="left:764px;top:918px;width:45px;height:28px;border:1px solid #dcdfe6;border-radius:3px;font-size:13px;color:#606266;line-height:25px;text-align:center">1</div>
<div class="t" style="left:813px;top:918px;line-height:27px;font-size:13px;color:#606266">页</div>
<div class="t" style="left:2452px;top:918px;line-height:27px;font-size:13px;color:#606266;letter-spacing:0.3px">共 1423 条</div>
<svg class="abs" style="left:0;top:0;z-index:10" width="2560" height="1305" viewBox="0 0 2560 1305"><circle cx="1280.5" cy="652.3" r="139.7" fill="none" stroke="#f80000" stroke-width="5.2"/><text transform="translate(1280.5,652.3) rotate(-102) translate(0,-106) scale(0.86,1)" text-anchor="middle" font-family="Liberation Sans" font-weight="bold" font-size="27" fill="#f80000">w</text><text transform="translate(1280.5,652.3) rotate(-86) translate(0,-106) scale(0.86,1)" text-anchor="middle" font-family="Liberation Sans" font-weight="bold" font-size="27" fill="#f80000">w</text><text transform="translate(1280.5,652.3) rotate(-70) translate(0,-106) scale(0.86,1)" text-anchor="middle" font-family="Liberation Sans" font-weight="bold" font-size="27" fill="#f80000">w</text><text transform="translate(1280.5,652.3) rotate(-54) translate(0,-106) scale(0.86,1)" text-anchor="middle" font-family="Liberation Sans" font-weight="bold" font-size="27" fill="#f80000">.</text><text transform="translate(1280.5,652.3) rotate(-38) translate(0,-106) scale(0.86,1)" text-anchor="middle" font-family="Liberation Sans" font-weight="bold" font-size="27" fill="#f80000">5</text><text transform="translate(1280.5,652.3) rotate(-22) translate(0,-106) scale(0.86,1)" text-anchor="middle" font-family="Liberation Sans" font-weight="bold" font-size="27" fill="#f80000">1</text><text transform="translate(1280.5,652.3) rotate(-6) translate(0,-106) scale(0.86,1)" text-anchor="middle" font-family="Liberation Sans" font-weight="bold" font-size="27" fill="#f80000">5</text><text transform="translate(1280.5,652.3) rotate(10) translate(0,-106) scale(0.86,1)" text-anchor="middle" font-family="Liberation Sans" font-weight="bold" font-size="27" fill="#f80000">y</text><text transform="translate(1280.5,652.3) rotate(26) translate(0,-106) scale(0.86,1)" text-anchor="middle" font-family="Liberation Sans" font-weight="bold" font-size="27" fill="#f80000">m</text><text transform="translate(1280.5,652.3) rotate(42) translate(0,-106) scale(0.86,1)" text-anchor="middle" font-family="Liberation Sans" font-weight="bold" font-size="27" fill="#f80000">.</text><text transform="translate(1280.5,652.3) rotate(58) translate(0,-106) scale(0.86,1)" text-anchor="middle" font-family="Liberation Sans" font-weight="bold" font-size="27" fill="#f80000">c</text><text transform="translate(1280.5,652.3) rotate(74) translate(0,-106) scale(0.86,1)" text-anchor="middle" font-family="Liberation Sans" font-weight="bold" font-size="27" fill="#f80000">o</text><text transform="translate(1280.5,652.3) rotate(90) translate(0,-106) scale(0.86,1)" text-anchor="middle" font-family="Liberation Sans" font-weight="bold" font-size="27" fill="#f80000">m</text><text transform="translate(1207,665.5) scale(0.85,1)" font-family="Liberation Sans" font-size="39" letter-spacing="4.5" fill="#f80000" stroke="#f80000" stroke-width="1">515</text><text x="1276" y="665" font-family="Liberation Sans" font-size="37" letter-spacing="2" fill="#f80000" stroke="#f80000" stroke-width="0.6">源码</text><text transform="translate(1205,732.5) scale(1,1.08)" font-family="Liberation Mono" font-weight="bold" font-size="28.3" fill="#f80000">515ym.com</text><text transform="translate(1280.5,652.3) rotate(27.50) translate(0,130.5)" text-anchor="middle" font-family="Liberation Sans" font-style="italic" font-size="16" fill="#f80000">5</text><text transform="translate(1280.5,652.3) rotate(20.80) translate(0,130.5)" text-anchor="middle" font-family="Liberation Sans" font-style="italic" font-size="16" fill="#f80000">1</text><text transform="translate(1280.5,652.3) rotate(14.10) translate(0,130.5)" text-anchor="middle" font-family="Liberation Sans" font-style="italic" font-size="16" fill="#f80000">5</text><text transform="translate(1280.5,652.3) rotate(7.40) translate(0,130.5)" text-anchor="middle" font-family="Liberation Sans" font-style="italic" font-size="16" fill="#f80000">y</text><text transform="translate(1280.5,652.3) rotate(0.70) translate(0,130.5)" text-anchor="middle" font-family="Liberation Sans" font-style="italic" font-size="16" fill="#f80000">m</text><text transform="translate(1280.5,652.3) rotate(-6.00) translate(0,130.5)" text-anchor="middle" font-family="Liberation Sans" font-style="italic" font-size="16" fill="#f80000">.</text><text transform="translate(1280.5,652.3) rotate(-12.70) translate(0,130.5)" text-anchor="middle" font-family="Liberation Sans" font-style="italic" font-size="16" fill="#f80000">c</text><text transform="translate(1280.5,652.3) rotate(-19.40) translate(0,130.5)" text-anchor="middle" font-family="Liberation Sans" font-style="italic" font-size="16" fill="#f80000">o</text><text transform="translate(1280.5,652.3) rotate(-26.10) translate(0,130.5)" text-anchor="middle" font-family="Liberation Sans" font-style="italic" font-size="16" fill="#f80000">m</text></svg>
</body></html>
